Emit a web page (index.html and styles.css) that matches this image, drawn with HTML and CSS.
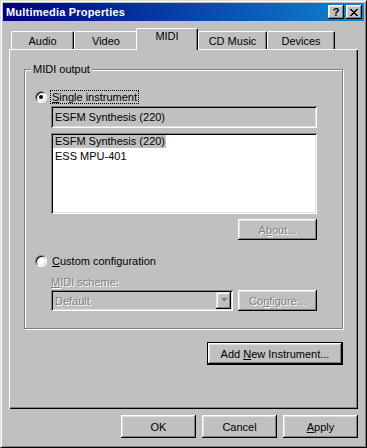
FILE: index.html
```html
<!DOCTYPE html>
<html lang="en">
<head>
  <meta charset="UTF-8">
  <title>Multimedia Properties</title>
  <link rel="stylesheet" href="styles.css">
</head>
<body>
  <div class="window">
    <div class="titlebar">
      <span class="title">Multimedia Properties</span>
      <div class="title-buttons">
        <div class="tbtn help">?</div>
        <div class="tbtn">
          <svg width="8" height="7" viewBox="0 0 8 7"><path fill="#000" d="M0 0h2v1h-2z M6 0h2v1h-2z M1 1h2v1h-2z M5 1h2v1h-2z M2 2h4v1h-4z M3 3h2v1h-2z M2 4h4v1h-4z M1 5h2v1h-2z M5 5h2v1h-2z M0 6h2v1h-2z M6 6h2v1h-2z"/></svg>
        </div>
      </div>
    </div>

    <div class="main">
      <div class="tabs">
        <div class="tab" style="width:63px">Audio</div>
        <div class="tab" style="width:64px">Video</div>
        <div class="tab selected" style="width:62px">MIDI</div>
        <div class="tab" style="width:69px">CD Music</div>
        <div class="tab" style="width:68px">Devices</div>
      </div>

      <div class="panel">
        <div class="group">
          <span class="group-label">MIDI output</span>

          <div class="radio-row">
            <span class="radio checked"></span>
            <span class="radio-label focus"><u>S</u>ingle instrument</span>
          </div>
          <div class="indent">
            <div class="field">ESFM Synthesis (220)</div>
            <div class="list">
              <div class="item"><span class="sel">ESFM Synthesis (220)</span></div>
              <div class="item">ESS MPU-401</div>
            </div>
            <div class="row-end">
              <div class="btn small disabled"><span>A<u>b</u>out...</span></div>
            </div>
          </div>

          <div class="radio-row second">
            <span class="radio"></span>
            <span class="radio-label"><u>C</u>ustom configuration</span>
          </div>
          <div class="indent">
            <div class="caption disabled"><u>M</u>IDI scheme:</div>
            <div class="combo-row">
              <div class="combo">
                <span class="combo-text disabled">Default</span>
                <span class="combo-arrow">
                  <svg width="8" height="5" viewBox="0 0 8 5"><path fill="#fff" d="M2 1h6l-3 3z"/><path fill="#808080" d="M1 0h7l-3.5 4z"/></svg>
                </span>
              </div>
              <div class="btn small disabled"><span>Co<u>n</u>figure...</span></div>
            </div>
          </div>
        </div>

        <div class="row-end">
          <div class="btn default wide"><span>Add <u>N</u>ew Instrument...</span></div>
        </div>
      </div>

      <div class="actions">
        <div class="btn">OK</div>
        <div class="btn">Cancel</div>
        <div class="btn"><span><u>A</u>pply</span></div>
      </div>
    </div>
  </div>
</body>
</html>
```

FILE: styles.css
```css
body {
  margin: 0;
  background-color: #c0c0c0;
  font-family: 'Liberation Sans', Arial, sans-serif;
  font-size: 11px;
  color: #000;
}

u {
  text-decoration: underline;
  text-underline-offset: 1px;
}

.window {
  width: 367px;
  height: 448px;
  box-sizing: border-box;
  border: 1px solid;
  border-color: #dfdfdf #000 #000 #dfdfdf;
  box-shadow: inset 1px 1px #fff, inset -1px -1px #808080;
  padding: 2px;
  background-color: #c0c0c0;
  display: flex;
  flex-direction: column;
}

.titlebar {
  height: 18px;
  flex-shrink: 0;
  background: linear-gradient(to right, #000080, #1084d0);
  display: flex;
  align-items: center;
  justify-content: space-between;
  padding: 0 2px 0 3px;
  color: white;
  font-weight: bold;
}

.title {
  letter-spacing: 0.2px;
}

.title-buttons {
  display: flex;
  gap: 2px;
}

.tbtn {
  width: 16px;
  height: 14px;
  box-sizing: border-box;
  background-color: #c0c0c0;
  box-shadow: inset -1px -1px #000, inset 1px 1px #fff, inset -2px -2px #808080, inset 2px 2px #dfdfdf;
  display: flex;
  align-items: center;
  justify-content: center;
  color: #000;
}

.tbtn.help {
  font-size: 11px;
  font-weight: bold;
  line-height: 14px;
}

.main {
  flex: 1;
  padding: 7px 6px 0;
  display: flex;
  flex-direction: column;
}

.tabs {
  display: flex;
  align-items: flex-end;
  height: 21px;
  padding-left: 2px;
}

.tab {
  height: 18px;
  box-sizing: border-box;
  border-top: 1px solid #fff;
  border-left: 1px solid #fff;
  border-right: 1px solid #000;
  border-radius: 2px 2px 0 0;
  box-shadow: inset -1px 0 #808080;
  text-align: center;
  line-height: 18px;
}

.tab.selected {
  position: relative;
  z-index: 1;
  height: 22px;
  margin-left: -2px;
  margin-bottom: -1px;
  background-color: #c0c0c0;
  line-height: 15px;
}

.panel {
  height: 360px;
  box-sizing: border-box;
  background-color: #c0c0c0;
  box-shadow: inset 1px 1px #fff, inset -1px -1px #000, inset -2px -2px #808080;
  padding: 20px 15px 0;
}

.group {
  position: relative;
  height: 260px;
  box-sizing: border-box;
  border: 1px solid #808080;
  box-shadow: inset 1px 1px #fff, 1px 1px #fff;
  padding: 20px 0 0 10px;
}

.group-label {
  position: absolute;
  top: -7px;
  left: 6px;
  padding: 0 2px;
  line-height: 13px;
  background-color: #c0c0c0;
}

.radio-row {
  display: flex;
  align-items: center;
  height: 14px;
}

.radio-row.second {
  margin-top: 14px;
}

.radio {
  width: 12px;
  height: 12px;
  box-sizing: border-box;
  border-radius: 50%;
  border: 1px solid;
  border-color: #808080 #fff #fff #808080;
  box-shadow: inset 1px 1px #000, inset -1px -1px #dfdfdf;
  background-color: #fff;
  display: flex;
  align-items: center;
  justify-content: center;
}

.radio.checked::after {
  content: '';
  width: 4px;
  height: 4px;
  border-radius: 50%;
  background-color: #000;
}

.radio-label {
  margin-left: 3px;
  padding: 0 1px;
  border: 1px solid transparent;
  line-height: 12px;
}

.radio-label.focus {
  border: 1px dotted #000;
}

.indent {
  margin-left: 16px;
  width: 266px;
}

.field {
  margin-top: 2px;
  height: 22px;
  box-sizing: border-box;
  box-shadow: inset 1px 1px #808080, inset -1px -1px #fff, inset 2px 2px #000, inset -2px -2px #dfdfdf;
  padding-left: 4px;
  line-height: 22px;
}

.list {
  margin-top: 5px;
  height: 81px;
  box-sizing: border-box;
  background-color: #fff;
  box-shadow: inset 1px 1px #808080, inset -1px -1px #fff, inset 2px 2px #000, inset -2px -2px #dfdfdf;
  padding: 2px;
}

.item {
  height: 15px;
  line-height: 13px;
  padding-left: 2px;
}

.item .sel {
  display: inline-block;
  margin-left: -2px;
  padding: 0 1px 0 2px;
  background-color: #c0c0c0;
}

.row-end {
  display: flex;
  justify-content: flex-end;
}

.caption {
  margin-top: 8px;
  line-height: 13px;
}

.disabled {
  color: #808080;
  text-shadow: 1px 1px #fff;
}

.combo-row {
  margin-top: 1px;
  display: flex;
  justify-content: space-between;
  align-items: flex-start;
}

.combo {
  width: 182px;
  height: 21px;
  box-sizing: border-box;
  box-shadow: inset 1px 1px #808080, inset -1px -1px #fff, inset 2px 2px #000, inset -2px -2px #dfdfdf;
  padding: 2px 2px 2px 4px;
  display: flex;
  align-items: center;
  justify-content: space-between;
}

.combo-arrow {
  width: 15px;
  height: 17px;
  box-sizing: border-box;
  box-shadow: inset -1px -1px #000, inset 1px 1px #dfdfdf, inset -2px -2px #808080, inset 2px 2px #fff;
  display: flex;
  align-items: center;
  justify-content: center;
}

.btn {
  width: 75px;
  height: 23px;
  box-sizing: border-box;
  background-color: #c0c0c0;
  box-shadow: inset -1px -1px #000, inset 1px 1px #fff, inset -2px -2px #808080, inset 2px 2px #dfdfdf;
  display: flex;
  align-items: center;
  justify-content: center;
}

.btn.small {
  width: 79px;
  height: 21px;
}

.row-end .btn.small {
  margin-top: 5px;
}

.btn.default {
  border: 1px solid #000;
}

.btn.wide {
  width: 136px;
  margin-top: 13px;
}

.actions {
  display: flex;
  justify-content: flex-end;
  gap: 6px;
  margin-top: 6px;
}
```
